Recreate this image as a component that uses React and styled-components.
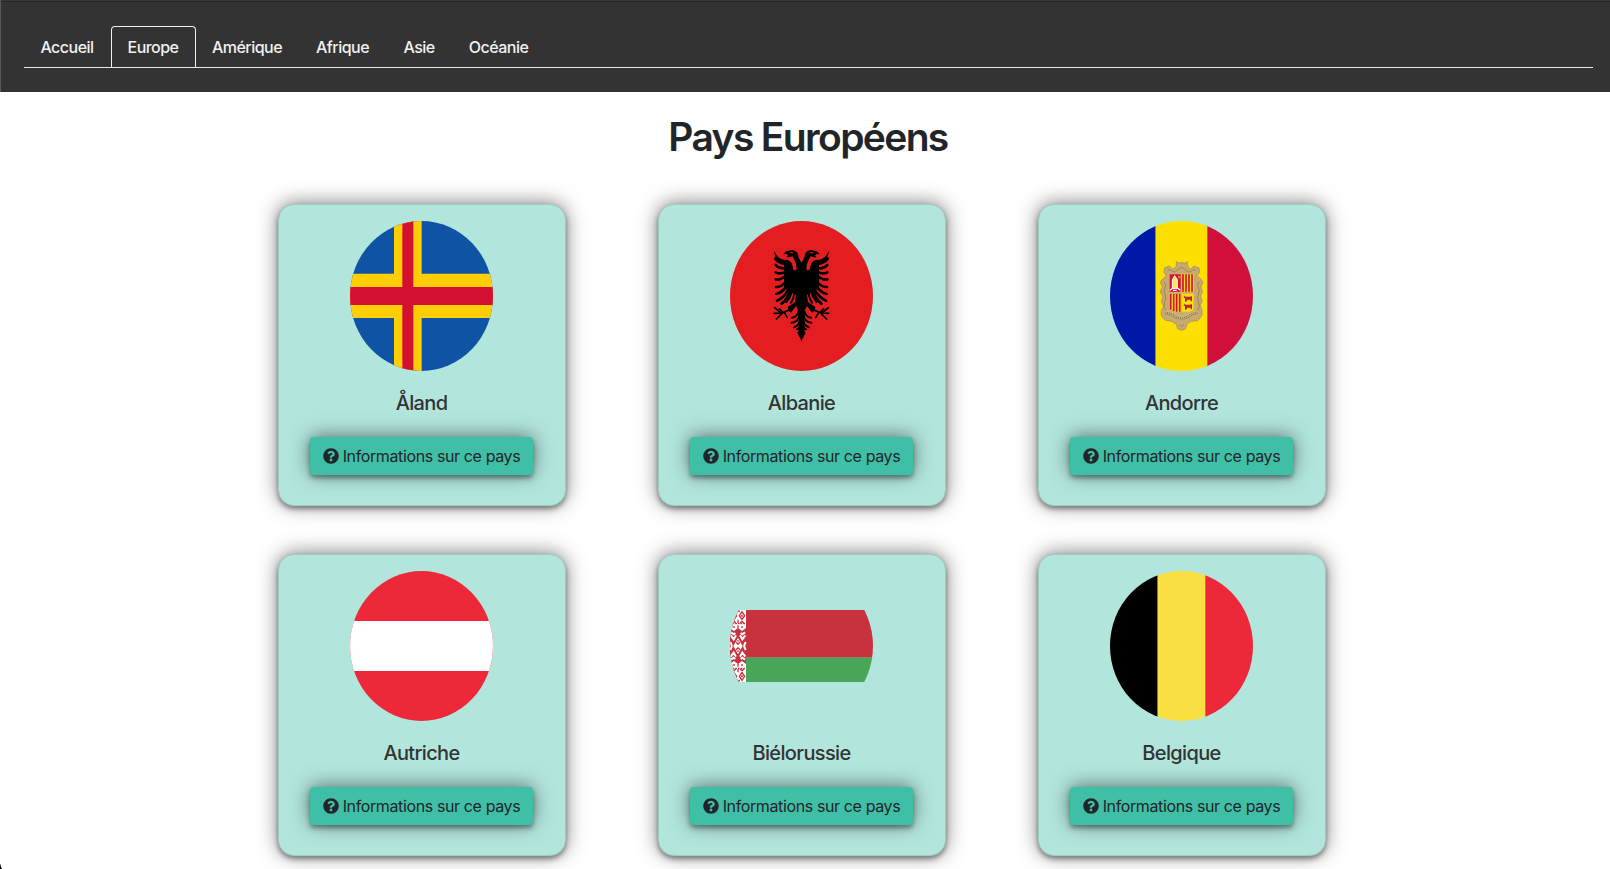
import React from "react";
import styled, { createGlobalStyle } from "styled-components";
import { FaQuestionCircle } from "react-icons/fa";

const GlobalStyle = createGlobalStyle`
  *, *::before, *::after { box-sizing: border-box; }
  html, body { margin: 0; padding: 0; overflow: hidden; }
  body {
    background: #fff;
    color: #212529;
    font-family: Inter, "Liberation Sans", sans-serif;
    font-size: 16px;
    line-height: 1.5;
  }
`;

const Page = styled.div`
  position: relative;
  height: 869px;
  overflow: hidden;
`;

const Header = styled.header`
  height: 92px;
  padding: 24px 17px 0 23px;
  background: #333;
  border-left: 1px solid #58595b;
  box-shadow: inset 0 1px 0 #3a3a3a, inset 0 2px 0 #262626;
`;

const Tabs = styled.nav`
  display: flex;
  height: 44px;
  padding-top: 2px;
  border-bottom: 1px solid #e9e9e9;
`;

const Tab = styled.a`
  display: flex;
  align-items: center;
  justify-content: center;
  width: ${(p) => p.$width}px;
  height: 41px;
  padding: 0 1px 1px 0;
  color: #f1f1f1;
  font-weight: 450;
  letter-spacing: -0.52px;
  border: 1px solid ${(p) => (p.$active ? "#f1f1f1" : "transparent")};
  border-bottom: 0;
  border-radius: 4px 4px 0 0;
`;

const Title = styled.h1`
  margin: 21px 0 0;
  padding-left: 6px;
  text-align: center;
  font-size: 39px;
  font-weight: 600;
  line-height: 48px;
  letter-spacing: -1.65px;
`;

const Grid = styled.main`
  display: grid;
  grid-template-columns: repeat(3, 288px);
  column-gap: 92px;
  row-gap: 48px;
  margin: 43px 0 0 278px;
`;

const shadow = "0 3px 5px rgba(0,0,0,.38), 0 -1px 20px rgba(0,0,0,.5)";

const Card = styled.article`
  display: flex;
  flex-direction: column;
  align-items: center;
  height: 302px;
  padding: 16px 1px 0 0;
  background: #b2e6dd;
  border: 1px solid #9cccc2;
  border-radius: 16px;
  box-shadow: ${shadow};
`;

const FlagFrame = styled.svg`
  display: block;
  width: 143px;
  height: 150px;
  border-radius: 50%;
`;

const Name = styled.h2`
  margin: 20px 0 0;
  color: #333;
  font-size: 20px;
  font-weight: 500;
  line-height: 24px;
  letter-spacing: -0.65px;
`;

const InfoButton = styled.button`
  display: flex;
  align-items: center;
  justify-content: center;
  gap: 4px;
  width: 223px;
  height: 38px;
  margin-top: 22px;
  padding: 0;
  border: 0;
  border-radius: 4px;
  background: #40bfa7;
  color: #212529;
  font: inherit;
  letter-spacing: -0.38px;
  white-space: nowrap;
  box-shadow: ${shadow};
`;

const Corner = styled.div`
  position: absolute;
  left: 0;
  bottom: 0;
  width: 2px;
  height: 5px;
  background: linear-gradient(#aaa, #000 60%);
  clip-path: polygon(0 0, 50% 0, 50% 70%, 100% 80%, 100% 100%, 0 100%);
`;

/* All flags share one coordinate space: x 30-459, y 33-483. */
const Flag = ({ children }) => (
  <FlagFrame viewBox="30 33 429 450" preserveAspectRatio="none" aria-hidden="true">
    {children}
  </FlagFrame>
);

const Aland = () => (
  <Flag>
    <rect x="30" y="33" width="429" height="450" fill="#0f53a5" />
    <path d="M162 33h83v450h-83zM30 191h429v133H30z" fill="#ffce05" />
    <path d="M187 33h33v450h-33zM30 231h429v54H30z" fill="#d41031" />
  </Flag>
);

const HalfEagle = () => (
  <g>
    <path d="M246 160C240 150 236 145 234 134C232 124 221 120 212 121L199 124L194 128L190 133L199 132L204 136L199 142L208 142L217 139L222 148Q229 160 230 176Q228 184 221 180L215 160Q206 146 193 150L182 146Q168 138 163 123Q163 140 172 152L192 164L192 232L208 246L228 254L225 276L203 291L205 302L213 308L228 288L234 300L236 362L232 368L246 395Z" />
    <g fill="none" stroke="#000" strokeWidth="8" strokeLinecap="round">
      <path d="M166 146Q175 159 196 161M167 165Q178 178 198 174M167 187Q181 194 198 185M167 208Q181 211 198 197M168 231Q187 232 200 211M169 252Q190 247 204 222M171 272Q194 262 207 235M185 281Q202 268 210 243" />
      <path d="M199 276Q211 263 215 246M213 278Q221 267 223 250" strokeWidth="6" />
      <path d="M216 323Q231 322 236 304M215 338Q231 337 239 319M222 352Q235 348 241 332M231 358Q240 354 243 342" strokeWidth="6" />
    </g>
    <path d="M209 299L184 310L164 293M187 309L163 310M187 310L169 327M193 307L202 323M188 307L178 296" fill="none" stroke="#000" strokeWidth="5" strokeLinecap="round" />
  </g>
);

const Albania = () => (
  <Flag>
    <rect x="30" y="33" width="429" height="450" fill="#e41e20" />
    <HalfEagle />
    <g transform="translate(489 0) scale(-1 1)"><HalfEagle /></g>
    <path d="M209 129l10-2M270 127l10 2" stroke="#e41e20" strokeWidth="3" />
  </Flag>
);

const Andorra = () => (
  <Flag>
    <rect x="30" y="33" width="137" height="450" fill="#0018a8" />
    <rect x="167" y="33" width="155" height="450" fill="#fee000" />
    <rect x="322" y="33" width="137" height="450" fill="#d0103a" />
    <path d="M229 155L238 160L245 157L253 160L262 155L262 168L272 178L282 168L297 174L298 188L290 197L304 209L309 217L302 231L308 245L301 258L307 274L300 286L306 300L306 316L293 332L272 334L260 343L257 356L245 361L233 356L229 343L216 334L196 331L184 317L184 302L191 289L184 275L189 260L181 246L187 230L181 217L187 208L200 198L192 187L194 174L208 168L219 178L229 169Z" fill="#c6aa70" stroke="#b39560" strokeWidth="3" />
    <path d="M203 181q8-7 13 3q9 7 17-4q12-14 24 0q8 11 17 4q5-10 13-3M192 215q9 8 3 17q-6 9 0 20q5 12-1 25q-5 13 2 23M298 215q-9 8-3 17q6 9 0 20q-5 12 1 25q5 13-2 23M195 310q19 3 27 12q22 10 45 0q8-9 27-12M238 344l7 6l7-6" fill="none" stroke="#a08555" strokeWidth="3" />
    <path d="M201 306q17 1 25 10q19 10 37 0q8-9 24-10" fill="none" stroke="#cdb884" strokeWidth="9" />
    <path d="M201 308q17 1 25 10q19 10 37 0q8-9 24-10" fill="none" stroke="#857452" strokeWidth="4" strokeDasharray="3 3" />
    <path d="M206 190h77v109q-5 9-18 9h-40q-15 0-19-9z" fill="#cfae70" />
    <path d="M209 193h33v52h-33z" fill="#d0103a" />
    <path d="M245 193h36v52h-36zM209 251h33v54h-18q-15-2-15-10zM245 251h36v44q0 9-16 10h-20z" fill="#fedf00" />
    <path d="M249 193v52M258 193v52M267 193v52M276 193v52M212 251v48M221 251v53M230 251v54M239 251v54" stroke="#d0103a" strokeWidth="5" />
    <path d="M217 235V209l7-12l8 12v26z" fill="#ffe84c" stroke="#fff" strokeWidth="3" />
    <path d="M210 241l9-7M232 233l9 8M219 241h11" stroke="#fff" strokeWidth="4" />
    <path d="M238 206v28" stroke="#d0103a" strokeWidth="4" />
    <path d="M234 201h8" stroke="#d98427" strokeWidth="7" />
    <path d="M251 256l6 4h14l5-2v16h-4v-5h-10l-3 6h-4v-10zM251 280l6 4h14l5-2v16h-4v-5h-10l-3 6h-4v-10z" fill="#c51d30" />
    <path d="M251 262h4M272 262h4M251 286h4M272 286h4" stroke="#3f5ca0" strokeWidth="3" />
  </Flag>
);

const Austria = () => (
  <Flag>
    <rect x="30" y="33" width="429" height="450" fill="#ed2939" />
    <rect x="30" y="183" width="429" height="150" fill="#fff" />
  </Flag>
);

const OrnamentHalf = () => (
  <g>
    <path d="M30 150h48v54l-12 9l-12-9l-12 9l-12-9z" fill="#fff" />
    <g fill="none" stroke="#c8313e" strokeWidth="4">
      <path d="M66 155l-8 12l8 12l8-12zM42 155l-8 12l8 12l8-12zM54 150l-5 6M54 150l5 6" />
      <path d="M66 164v6M42 164v6" strokeWidth="5" />
      <path d="M30 191h48" strokeDasharray="5 3" />
      <path d="M54 179v10M66 184l-6 6M66 184l6 6M42 184l-6 6M42 184l6 6M54 196v9M66 198v6M42 198v6" />
    </g>
    <g fill="none" stroke="#fff" strokeWidth="6">
      <path d="M33 217l8 6l5-4M75 217l-8 6l-5-4M32 226l9 12l7-12M76 226l-9 12l-7-12" />
      <path d="M31 246l5 12M77 246l-5 12" />
    </g>
    <path d="M54 233l14 25H40z" fill="#fff" />
    <path d="M48 246l6 7l6-7M54 240v5" fill="none" stroke="#c8313e" strokeWidth="4" />
  </g>
);

const Belarus = () => (
  <Flag>
    <rect x="30" y="150" width="429" height="143" fill="#c8313e" />
    <rect x="30" y="293" width="429" height="73" fill="#4aa657" />
    <rect x="30" y="150" width="48" height="216" fill="#c8313e" />
    <OrnamentHalf />
    <g transform="translate(0 516) scale(1 -1)"><OrnamentHalf /></g>
  </Flag>
);

const Belgium = () => (
  <Flag>
    <rect x="30" y="33" width="143" height="450" fill="#000" />
    <rect x="173" y="33" width="143" height="450" fill="#fae042" />
    <rect x="316" y="33" width="143" height="450" fill="#ed2939" />
  </Flag>
);

const tabs = [
  ["Accueil", 87],
  ["Europe", 85],
  ["Amérique", 103],
  ["Afrique", 88],
  ["Asie", 65],
  ["Océanie", 94],
];

const countries = [
  ["Åland", Aland],
  ["Albanie", Albania],
  ["Andorre", Andorra],
  ["Autriche", Austria],
  ["Biélorussie", Belarus],
  ["Belgique", Belgium],
];

export default function App() {
  return (
    <Page>
      <GlobalStyle />
      <Header>
        <Tabs>
          {tabs.map(([label, width]) => (
            <Tab key={label} $width={width} $active={label === "Europe"}>
              {label}
            </Tab>
          ))}
        </Tabs>
      </Header>
      <Title>Pays Européens</Title>
      <Grid>
        {countries.map(([name, CountryFlag]) => (
          <Card key={name}>
            <CountryFlag />
            <Name>{name}</Name>
            <InfoButton>
              <FaQuestionCircle size={16} />
              <span>Informations sur ce pays</span>
            </InfoButton>
          </Card>
        ))}
      </Grid>
      <Corner />
    </Page>
  );
}
